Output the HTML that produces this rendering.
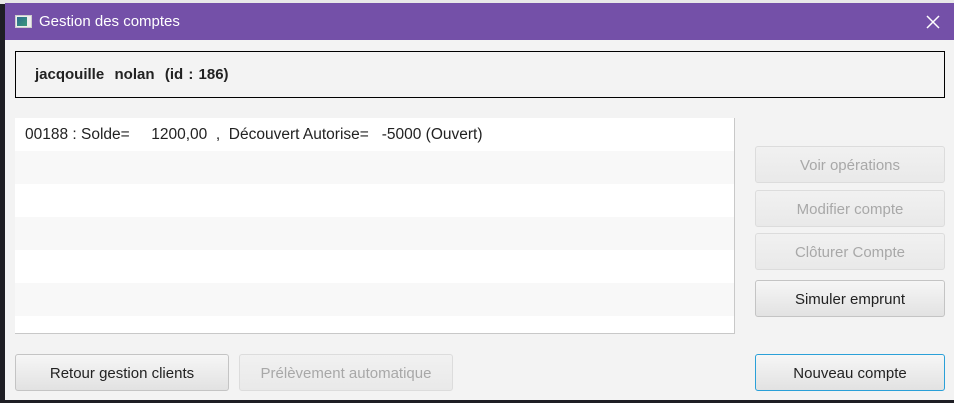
<!DOCTYPE html>
<html><head><style>
*{box-sizing:border-box;margin:0;padding:0}
body{width:954px;height:403px;overflow:hidden;background:#1e1e24;font-family:"Liberation Sans",sans-serif;position:relative}
.a{position:absolute}
.top{left:0;top:0;width:954px;height:4px;background:#e8e8e8}
.win{left:5px;top:3px;width:949px;height:397px;background:#f3f3f3}
.title{left:5px;top:3px;width:949px;height:37px;background:#7450a8;color:#fff;font-size:15px}
.btn{position:absolute;border:1px solid #c4c4c4;border-radius:3px;background:linear-gradient(#f6f6f6,#e2e2e2);font-size:15px;color:#222;text-align:center;line-height:37px}
.dis{color:#a8a8a8;border-color:#dcdcdc;background:linear-gradient(#f1f1f1,#e9e9e9)}
.row{position:absolute;left:0;width:720px;height:33px}
</style></head><body>
<div class="a top"></div>
<div class="a win"></div>
<div class="a title">
 <div class="a" style="left:10px;top:12px;width:17px;height:13px;background:#eee;border:1px solid #ccc"><div style="position:absolute;left:1px;top:1px;width:10px;height:9px;background:linear-gradient(135deg,#2d6b8f,#3a9a7a)"></div></div>
 <div class="a" style="left:34px;top:10px">Gestion des comptes</div>
 <svg class="a" style="left:921px;top:12px" width="14" height="14"><path d="M1 1L13 13M13 1L1 13" stroke="#fff" stroke-width="1.5"/></svg>
</div>
<div class="a" style="left:15px;top:51px;width:930px;height:47px;border:1.5px solid #000"></div>
<div class="a" style="left:35px;top:66px;font-size:15px;font-weight:bold;color:#222;word-spacing:1px">jacqouille&nbsp; nolan&nbsp; (id : 186)</div>
<div class="a" style="left:15px;top:118px;width:720px;height:216px;background:#fff;border-right:1px solid #c8c8c8;border-bottom:1px solid #c8c8c8;overflow:hidden">
 <div class="row" style="top:0;background:#fff"></div>
 <div class="row" style="top:33px;background:#f8f8f8"></div>
 <div class="row" style="top:99px;background:#f8f8f8"></div>
 <div class="row" style="top:165px;background:#f8f8f8"></div>
 <div class="a" style="left:10px;top:8px;font-size:15.5px;color:#222;white-space:pre">00188 : Solde=     1200,00  ,  Découvert Autorise=   -5000 (Ouvert)</div>
</div>
<div class="btn dis" style="left:755px;top:146px;width:190px;height:37px">Voir opérations</div>
<div class="btn dis" style="left:755px;top:190px;width:190px;height:37px">Modifier compte</div>
<div class="btn dis" style="left:755px;top:233px;width:190px;height:37px">Clôturer Compte</div>
<div class="btn" style="left:755px;top:280px;width:190px;height:37px">Simuler emprunt</div>
<div class="btn" style="left:15px;top:354px;width:214px;height:37px">Retour gestion clients</div>
<div class="btn dis" style="left:239px;top:354px;width:214px;height:37px">Prélèvement automatique</div>
<div class="btn" style="left:755px;top:354px;width:190px;height:37px;border-color:#2aa0d8">Nouveau compte</div>
</body></html>
